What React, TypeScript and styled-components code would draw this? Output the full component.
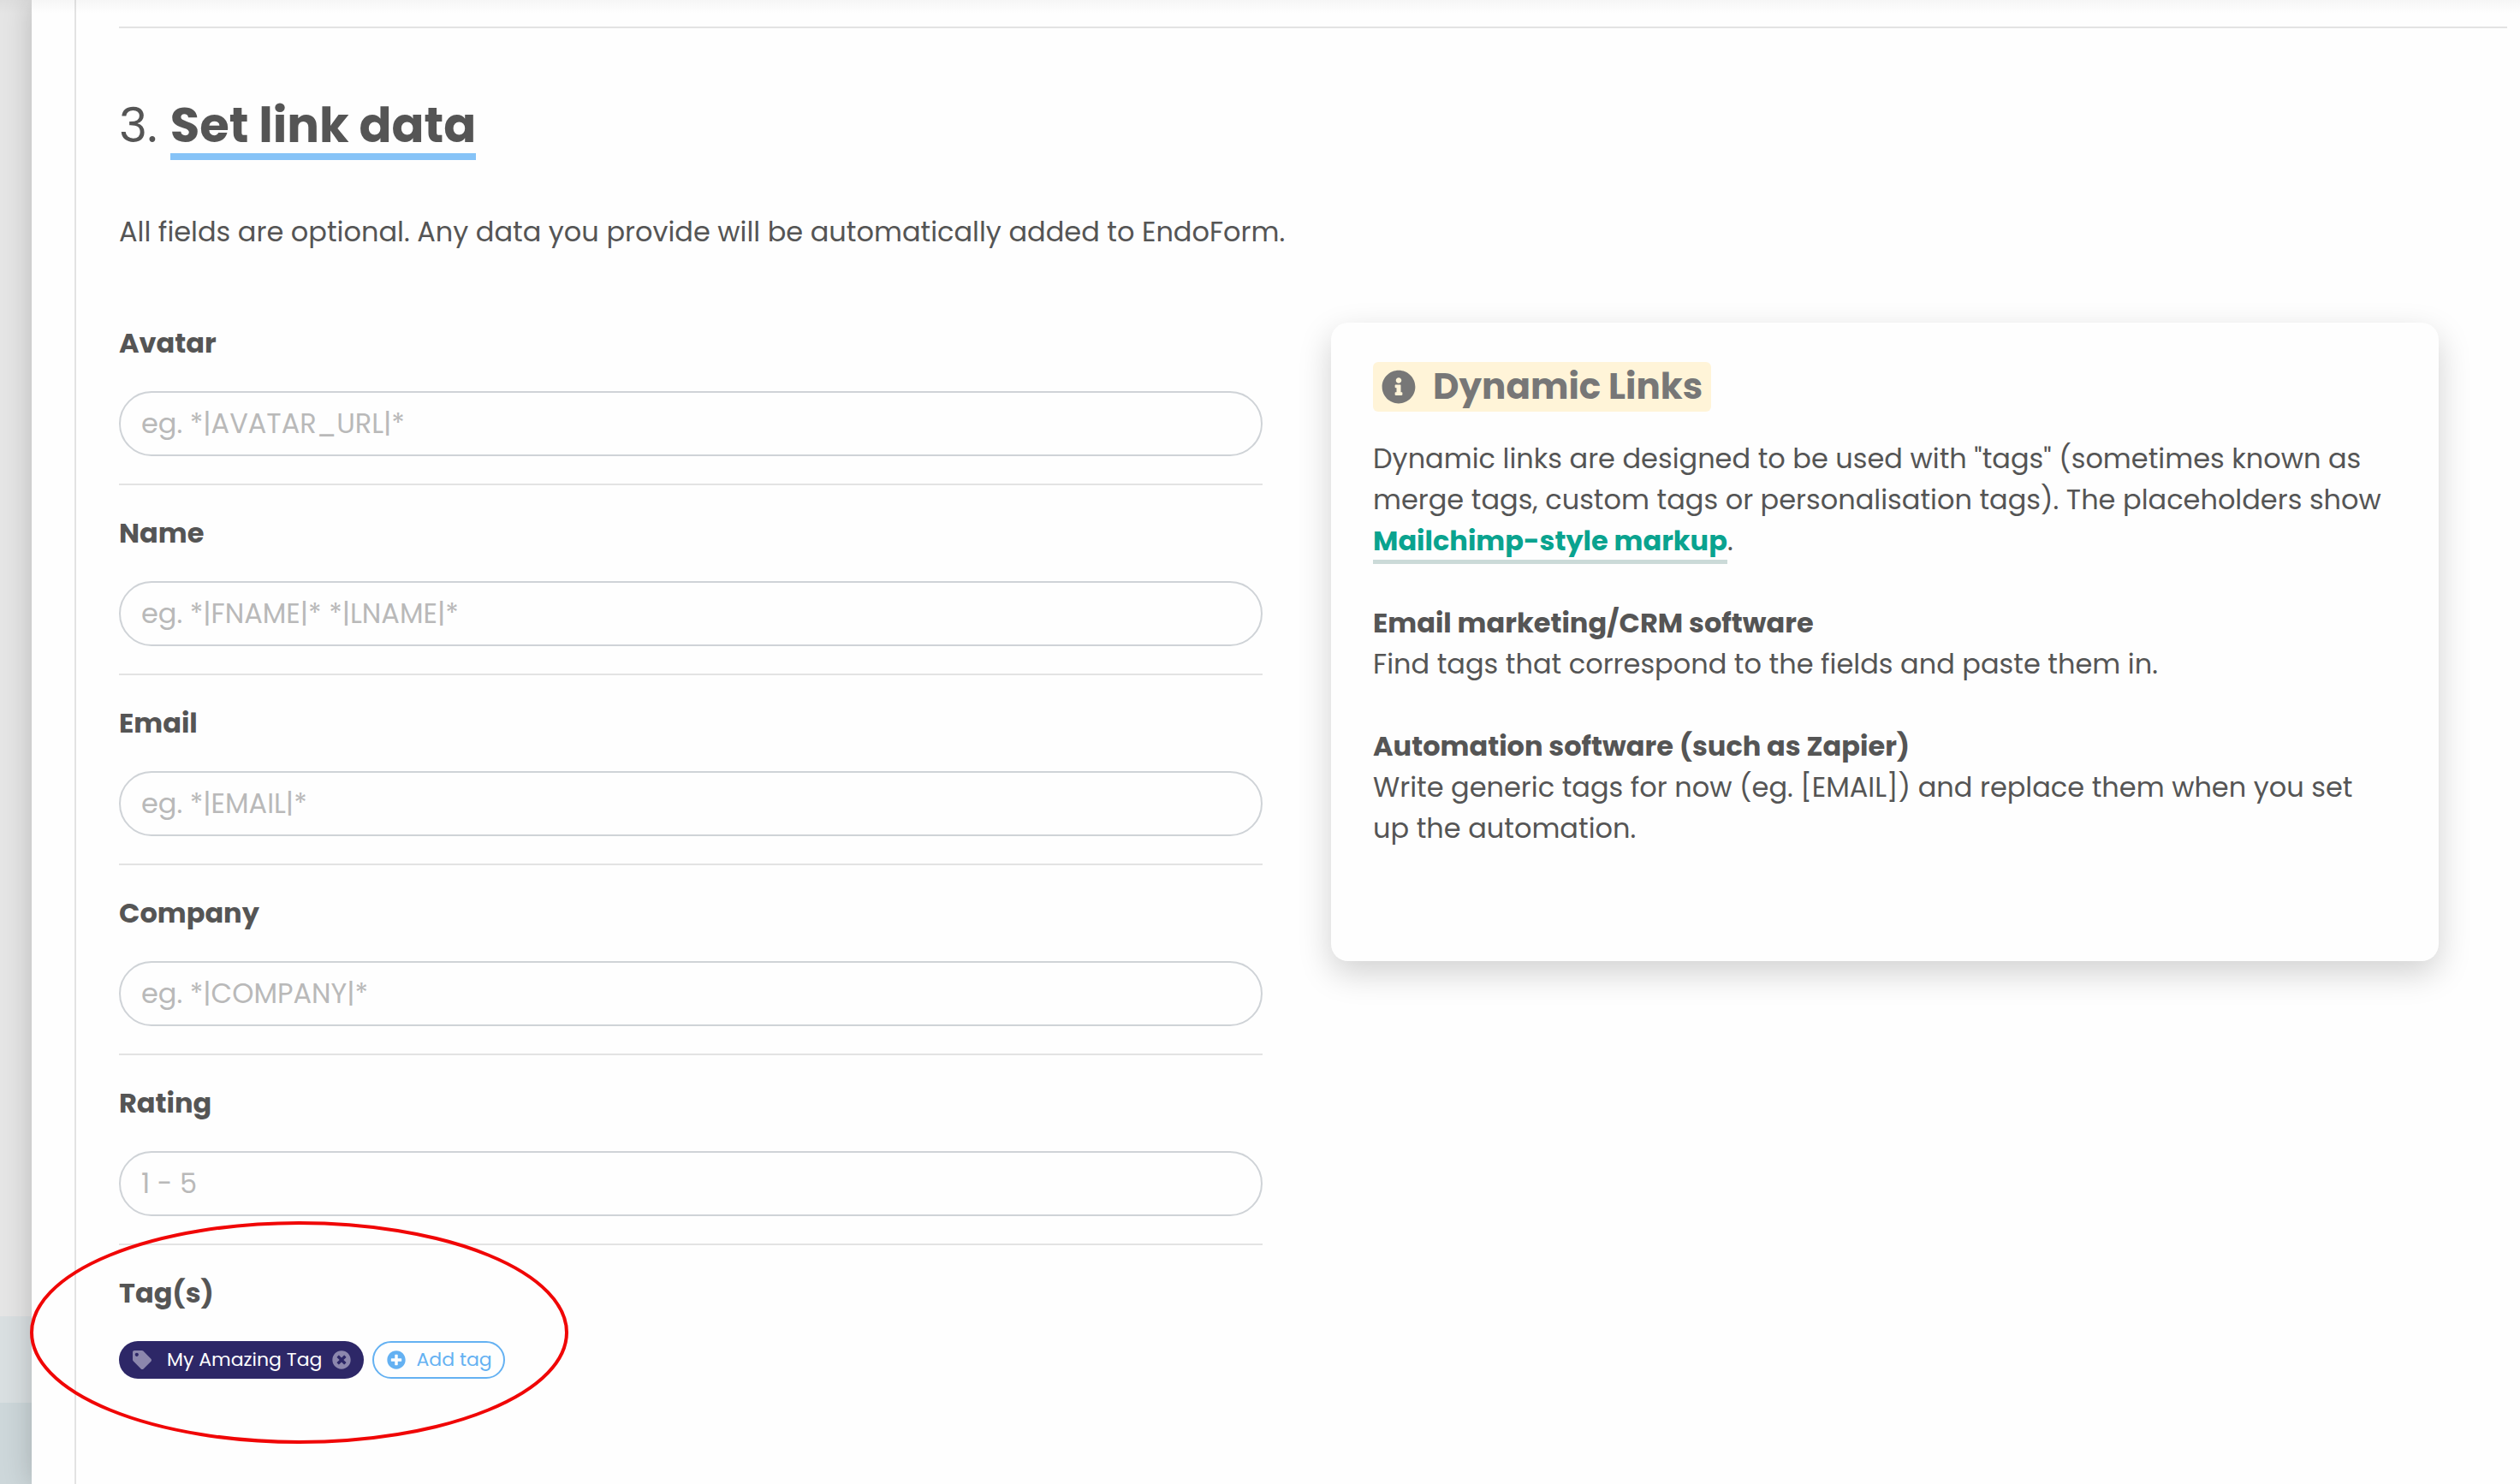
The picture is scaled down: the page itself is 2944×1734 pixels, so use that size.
import React from "react";
import styled, { createGlobalStyle } from "styled-components";
import { FaInfoCircle, FaPlusCircle, FaTag, FaTimesCircle } from "react-icons/fa";

const GlobalStyle = createGlobalStyle`
  *, *::before, *::after { box-sizing: border-box; }
  body {
    margin: 0;
    background: #e3e3e3;
    color: #555;
    font-family: Poppins, Inter, "Open Sans", sans-serif;
    font-size: 32px;
    line-height: 48px;
  }
  h2, h3, h4, p { margin: 0; font-weight: 400; }
`;

const Page = styled.div`
  position: relative;
  display: flex;
  min-height: 100vh;
  padding-left: 37px;
  background: linear-gradient(#e5e5e5 0 1538px, #d9dfe1 1538px 1639px, #cdd7da 1639px);
  overflow: hidden;
`;

const TopShade = styled.div`
  position: absolute;
  inset: 0 0 auto 0;
  height: 16px;
  background: linear-gradient(rgba(0, 0, 0, 0.03), rgba(0, 0, 0, 0));
  pointer-events: none;
`;

const Sheet = styled.div`
  flex: 1;
  display: flex;
  padding-left: 50px;
  background: #fefefe;
  box-shadow: 0 0 32px rgba(0, 0, 0, 0.2);
`;

const Step = styled.main`
  flex: 1;
  border-left: 2px solid #e3e3e3;
  padding: 31px 15px 0 50px;
`;

const Rule = styled.hr`
  width: 100%;
  height: 2px;
  margin: 0;
  border: 0;
  background: #e3e3e3;
`;

const Title = styled.h2`
  margin-top: 82px;
  font-size: 56px;
  line-height: 64px;
`;

const TitleMark = styled.strong`
  display: inline-block;
  border-bottom: 8px solid #86c3f7;
  font-weight: 700;
`;

const Intro = styled.p`
  margin-top: 60px;
`;

const Columns = styled.div`
  display: grid;
  grid-template-columns: 1336fr 1294fr;
  gap: 80px;
  align-items: start;
  margin-top: 82px;
  padding-right: 80px;
`;

const Fields = styled.form`
  display: flex;
  flex-direction: column;
  gap: 32px;
`;

const Label = styled.label`
  font-weight: 700;
`;

const Field = styled.div`
  display: flex;
  flex-direction: column;
  gap: 32px;
`;

const TextBox = styled.input`
  width: 100%;
  height: 76px;
  padding: 0 24px;
  border: 2px solid #cfd3d7;
  border-radius: 38px;
  background: #fefefe;
  color: #555;
  font: inherit;
  &::placeholder { color: #b9b9b9; opacity: 1; }
`;

const Tags = styled.div`
  display: flex;
  gap: 10px;
`;

const pill = `
  display: flex;
  align-items: center;
  height: 44px;
  border-radius: 22px;
  font-size: 22px;
  line-height: 32px;
`;

const Tag = styled.span`
  ${pill}
  padding: 0 15px 0 16px;
  background: #2d2767;
  color: #fff;
  svg { color: #8c87ad; }
`;

const TagName = styled.span`
  margin: 0 12px 0 18px;
`;

const IconButton = styled.button`
  display: flex;
  padding: 0;
  border: 0;
  background: none;
`;

const AddTag = styled.button`
  ${pill}
  gap: 12px;
  padding: 0 13px 0 15px;
  border: 2px solid #64b1f2;
  background: #fefefe;
  color: #64b1f2;
  font-family: inherit;
`;

const Card = styled.aside`
  min-height: 746px;
  padding: 46px 56px 46px 49px;
  border-radius: 20px;
  background: #fefefe;
  box-shadow: 0 14px 38px rgba(0, 0, 0, 0.18);
`;

const CardTitle = styled.h3`
  display: flex;
  align-items: center;
  gap: 20px;
  width: fit-content;
  height: 58px;
  margin-bottom: 31px;
  padding: 0 10px;
  border-radius: 6px;
  background: #fff4d8;
  color: #777;
  font-size: 42px;
  font-weight: 700;
`;

const CardText = styled.p`
  & + h4 { margin-top: 48px; }
`;

const CardHeading = styled.h4`
  font-weight: 700;
`;

const MarkupLink = styled.a`
  border-bottom: 5px solid #cbdad8;
  color: #0aa38f;
  font-weight: 700;
  text-decoration: none;
`;

const Ring = styled.svg`
  position: absolute;
  left: 35px;
  top: 1427px;
  width: 629px;
  height: 260px;
  pointer-events: none;
`;

const fields = [
  { id: "avatar", label: "Avatar", hint: "eg. *|AVATAR_URL|*" },
  { id: "name", label: "Name", hint: "eg. *|FNAME|* *|LNAME|*" },
  { id: "email", label: "Email", hint: "eg. *|EMAIL|*" },
  { id: "company", label: "Company", hint: "eg. *|COMPANY|*" },
  { id: "rating", label: "Rating", hint: "1 - 5" },
];

export default function App() {
  return (
    <>
      <GlobalStyle />
      <Page>
        <Sheet>
          <Step>
            <Rule />
            <Title>
              3. <TitleMark>Set link data</TitleMark>
            </Title>
            <Intro>
              All fields are optional. Any data you provide will be automatically added to EndoForm.
            </Intro>
            <Columns>
              <Fields onSubmit={(e) => e.preventDefault()}>
                {fields.map((f) => (
                  <React.Fragment key={f.id}>
                    <Field>
                      <Label htmlFor={f.id}>{f.label}</Label>
                      <TextBox id={f.id} type="text" placeholder={f.hint} />
                    </Field>
                    <Rule />
                  </React.Fragment>
                ))}
                <Field>
                  <Label as="span">Tag(s)</Label>
                  <Tags>
                    <Tag>
                      <FaTag size={22} />
                      <TagName>My Amazing Tag</TagName>
                      <IconButton type="button" aria-label="Remove tag">
                        <FaTimesCircle size={22} />
                      </IconButton>
                    </Tag>
                    <AddTag type="button">
                      <FaPlusCircle size={22} />
                      Add tag
                    </AddTag>
                  </Tags>
                </Field>
              </Fields>
              <Card>
                <CardTitle>
                  <FaInfoCircle size={40} />
                  Dynamic Links
                </CardTitle>
                <CardText>
                  Dynamic links are designed to be used with "tags" (sometimes known as merge tags,
                  custom tags or personalisation tags). The placeholders show{" "}
                  <MarkupLink href="#markup">Mailchimp-style markup</MarkupLink>.
                </CardText>
                <CardHeading>Email marketing/CRM software</CardHeading>
                <CardText>Find tags that correspond to the fields and paste them in.</CardText>
                <CardHeading>Automation software (such as Zapier)</CardHeading>
                <CardText>
                  Write generic tags for now (eg. [EMAIL]) and replace them when you set up the
                  automation.
                </CardText>
              </Card>
            </Columns>
          </Step>
        </Sheet>
        <TopShade />
        <Ring viewBox="0 0 629 260" aria-hidden="true">
          <ellipse cx="314.5" cy="130" rx="312.5" ry="128" fill="none" stroke="#f00606" strokeWidth="4" />
        </Ring>
      </Page>
    </>
  );
}
